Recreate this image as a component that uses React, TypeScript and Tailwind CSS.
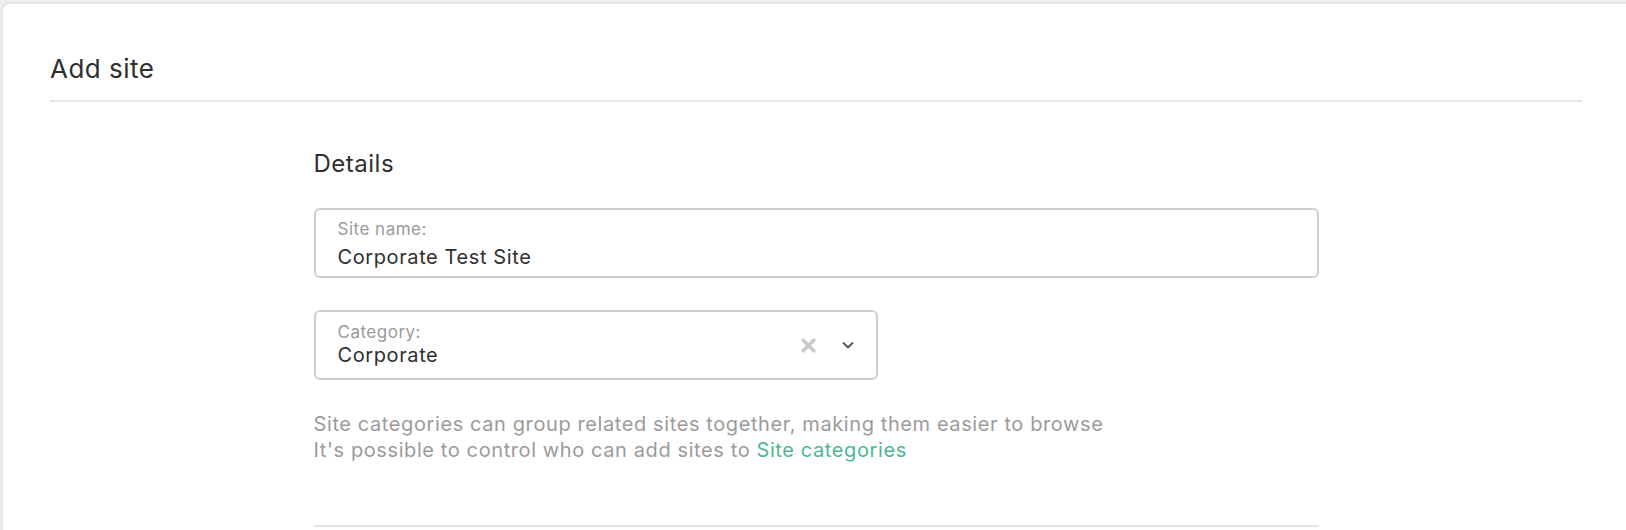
import React from "react";

function ClearIcon() {
  return (
    <svg className="h-[17px] w-[17px]" viewBox="0 0 16 16" aria-hidden="true">
      <path d="M3 3 L13 13 M13 3 L3 13" stroke="#c9c9c9" strokeWidth="3.4" strokeLinecap="round" fill="none" />
    </svg>
  );
}

function ChevronIcon() {
  return (
    <svg className="h-[12px] w-[12px]" viewBox="0 0 12 12" aria-hidden="true">
      <path d="M1.5 4 L6 8.5 L10.5 4" stroke="#555" strokeWidth="1.8" strokeLinecap="round" strokeLinejoin="round" fill="none" />
    </svg>
  );
}

export default function App() {
  return (
    <div
      className="h-[530px] w-full overflow-hidden bg-[#efefef] pl-[1px] pt-[2px]"
      style={{ fontFamily: "Inter, 'Noto Sans', sans-serif" }}
    >
      <div className="h-full rounded-tl-lg border-l-2 border-t-2 border-[#e4e4e4] bg-white pl-[47px] pr-[44px]">
        <div className="border-b-2 border-[#e6e6e6] pb-[14px] pt-[48px]">
          <h1 className="text-[26px] leading-[34px] tracking-[0.5px] text-[#2f2f2f]">Add site</h1>
        </div>

        <div className="mx-auto w-[1005px] pt-[47px]">
          <h2 className="text-[24px] leading-[30px] tracking-[0.5px] text-[#2f2f2f]">Details</h2>

          <div className="mt-[29px] flex h-[70px] flex-col justify-center rounded-md border-2 border-[#cfcfcf] px-[22px]">
            <label className="mt-[2px] text-[17px] leading-[20px] tracking-[0.5px] text-[#9a9a9a]">Site name:</label>
            <input
              className="mt-[5px] text-[20px] leading-[26px] tracking-[0.6px] text-[#2f2f2f] outline-none"
              defaultValue="Corporate Test Site"
            />
          </div>

          <div className="mt-[32px] flex h-[70px] w-[564px] items-center rounded-md border-2 border-[#cfcfcf] pl-[22px] pr-[22px]">
            <div className="flex flex-1 flex-col">
              <span className="text-[17px] leading-[20px] tracking-[0.5px] text-[#9a9a9a]">Category:</span>
              <span className="text-[20px] leading-[26px] tracking-[0.6px] text-[#2f2f2f]">Corporate</span>
            </div>
            <button type="button" className="flex items-center">
              <ClearIcon />
            </button>
            <button type="button" className="ml-[25px] flex items-center">
              <ChevronIcon />
            </button>
          </div>

          <div className="mt-[31px] text-[20px] leading-[26px] tracking-[0.6px] text-[#9b9b9b]">
            <p>Site categories can group related sites together, making them easier to browse</p>
            <p>
              It's possible to control who can add sites to{" "}
              <a href="#" className="text-[#4db892]">Site categories</a>
            </p>
          </div>

          <div className="mt-[62px] border-t-2 border-[#e6e6e6]" />
        </div>
      </div>
    </div>
  );
}
